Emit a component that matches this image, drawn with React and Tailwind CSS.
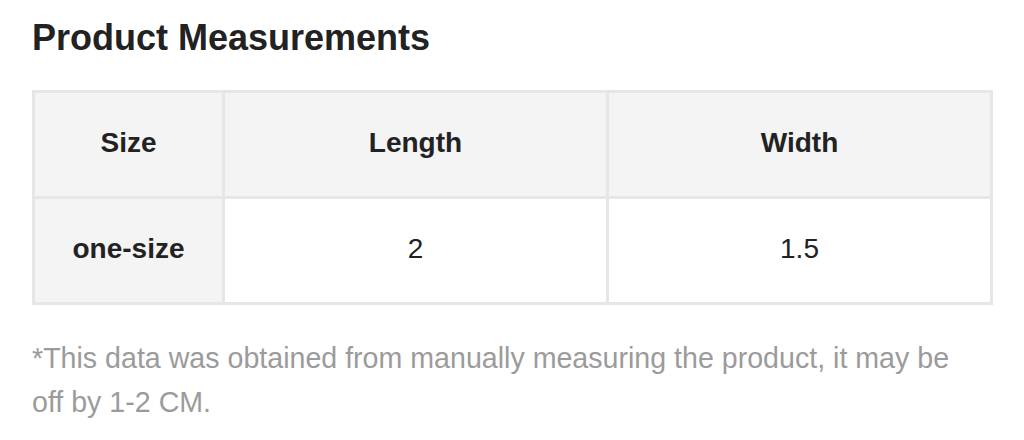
const rows = [{ size: 'one-size', length: '2', width: '1.5' }];

export default function App() {
  return (
    <div className="w-[1024px] h-[440px] bg-white px-8 pt-[17px] font-['Liberation_Sans',Arial,sans-serif] text-[#222]">
      <h2 className="text-[36px] leading-[42px] font-bold">Product Measurements</h2>
      <table className="mt-[31px] w-[958px] border-collapse table-fixed text-[28px]">
        <colgroup>
          <col className="w-[190px]" />
          <col className="w-[384px]" />
          <col className="w-[384px]" />
        </colgroup>
        <thead>
          <tr className="bg-[#f4f4f4] h-[106px]">
            <th className="border-[3px] border-[#e6e6e6] pb-[4px] font-bold">Size</th>
            <th className="border-[3px] border-[#e6e6e6] pb-[4px] font-bold">Length</th>
            <th className="border-[3px] border-[#e6e6e6] pb-[4px] font-bold">Width</th>
          </tr>
        </thead>
        <tbody>
          {rows.map((r) => (
            <tr key={r.size} className="h-[106px]">
              <td className="border-[3px] border-[#e6e6e6] bg-[#f4f4f4] pb-[4px] text-center font-bold">{r.size}</td>
              <td className="border-[3px] border-[#e6e6e6] pb-[4px] text-center">{r.length}</td>
              <td className="border-[3px] border-[#e6e6e6] pb-[4px] text-center">{r.width}</td>
            </tr>
          ))}
        </tbody>
      </table>
      <p className="mt-[31px] w-[935px] text-[28.6px] leading-[44px] text-[#9b9b9b]">
        *This data was obtained from manually measuring the product, it may be off by 1-2 CM.
      </p>
    </div>
  );
}
